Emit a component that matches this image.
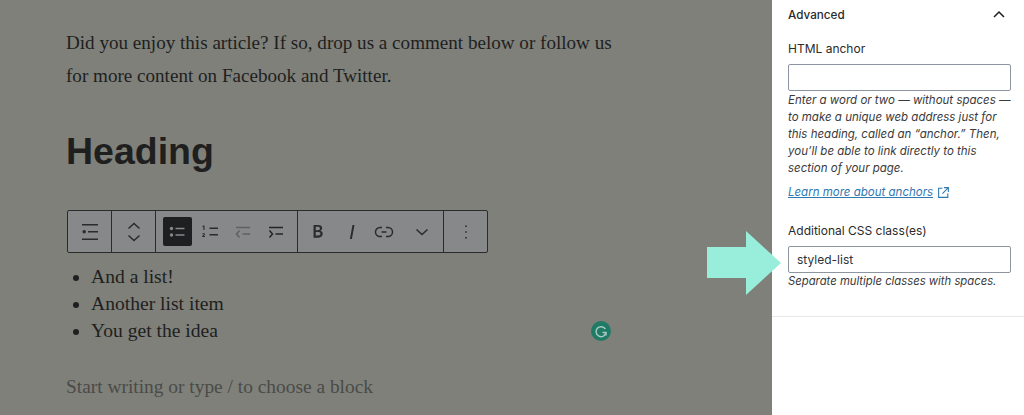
<div class="page">
  <main class="editor">
    <p class="para">Did you enjoy this article? If so, drop us a comment below or follow us for more content on Facebook and Twitter.</p>
    <h2>Heading</h2>
    <div class="toolbar">
      <div class="group g1">
        <button aria-label="List"><svg viewBox="0 0 24 24" width="24" height="24"><path d="M4 4h16v1.5H4zM10 11h10v1.5H10zM4 18.5h16V20H4z"/><circle cx="6.2" cy="11.8" r="1.7"/></svg></button>
      </div>
      <div class="group g2">
        <button aria-label="Move"><svg viewBox="0 0 24 28" width="24" height="28" fill="none" stroke="#2a2b2d" stroke-width="1.5"><path d="M6.500 10.500 12 5.500l5.500 5M6.500 17.500l5.500 5 5.500-5"/></svg></button>
      </div>
      <div class="group g3">
        <button class="active" aria-label="Bulleted"><svg viewBox="0 0 24 24" width="24" height="24"><circle cx="6.5" cy="8.500" r="1.7"/><circle cx="6.5" cy="15" r="1.7"/><path d="M10.500 7.700h9v1.600h-9zM10.500 14.200h9v1.600h-9z"/></svg></button>
        <button aria-label="Numbered"><svg viewBox="0 0 24 24" width="24" height="24"><path d="M11.500 7.500h8.500v1.600h-8.500zM11.500 14h8.500v1.600h-8.500zM5.400 5.500h1.100V10H5.400V6.800l-.9.4v-1zM4.300 13.500c.4-.6 2.600-.9 2.600.7 0 .8-.8 1.200-1.400 1.800h1.500v.9H4.200v-.8l1.500-1.500c.4-.5.1-.8-.2-.8-.3 0-.6.2-.9.4z"/></svg></button>
        <button class="dim" aria-label="Outdent"><svg viewBox="0 0 24 24" width="24" height="24" fill="none" stroke="#5f6062" stroke-width="1.500"><path d="M5 7.500h14M11.500 14h7.500M8.500 10.500 5.500 14l3 3.500"/></svg></button>
        <button aria-label="Indent"><svg viewBox="0 0 24 24" width="24" height="24" fill="none" stroke="#232426" stroke-width="1.500"><path d="M5 7.500h14M11.500 14h7.500M5.500 10.500l3 3.500-3 3.500"/></svg></button>
      </div>
      <div class="group g4">
        <button aria-label="Bold"><svg viewBox="0 0 24 24" width="21" height="21"><path d="M7.500 4.500h5.300c2.800 0 4.500 1.400 4.500 3.600 0 1.500-.8 2.600-2.100 3.100 1.700.4 2.800 1.700 2.800 3.500 0 2.500-1.900 4.300-5 4.300H7.500zm2.500 2.200v4h2.400c1.500 0 2.400-.8 2.400-2 0-1.300-.9-2-2.400-2zm0 6v3.800h2.700c1.700 0 2.700-.7 2.700-1.900 0-1.300-1-1.900-2.700-1.900z" fill-rule="evenodd"/></svg></button>
        <button aria-label="Italic"><svg viewBox="0 0 24 24" width="24" height="24"><path d="M12.500 5h2l-2.600 14h-2z"/></svg></button>
        <button class="linkbtn" aria-label="Link"><svg viewBox="0 0 24 24" width="24" height="24" fill="none" stroke="#2a2b2d" stroke-width="1.500"><path d="M10 7.500H8a4.500 4.500 0 0 0 0 9h2M14 7.500h2a4.500 4.500 0 0 1 0 9h-2M9.500 12h5"/></svg></button>
        <button class="morebtn" aria-label="More"><svg viewBox="0 0 24 24" width="24" height="24" fill="none" stroke="#2a2b2d" stroke-width="1.500"><path d="M6.500 9.500 12 14.500l5.500-5"/></svg></button>
      </div>
      <div class="group g5">
        <button aria-label="Options"><svg viewBox="0 0 24 24" width="24" height="24"><path d="M11.200 5.500h1.600v1.600h-1.600zM11.200 11.200h1.600v1.600h-1.600zM11.200 16.900h1.600v1.600h-1.600z"/></svg></button>
      </div>
    </div>
    <ul>
      <li>And a list!</li>
      <li>Another list item</li>
      <li>You get the idea</li>
    </ul>
    <p class="placeholder">Start writing or type / to choose a block</p>
  </main>
  <aside class="sidebar">
    <div class="panel">
      <div class="panel-head">
        <span>Advanced</span>
        <svg viewBox="0 0 24 24" width="24" height="24" fill="none" stroke="#1e1e1e" stroke-width="1.500"><path d="M7 14 12 9l5 5"/></svg>
      </div>
      <label for="anchor">HTML anchor</label>
      <input id="anchor" type="text" />
      <p class="help">Enter a word or two — without spaces — to make a unique web address just for this heading, called an “anchor.” Then, you’ll be able to link directly to this section of your page.</p>
      <p class="learn"><span class="link">Learn more about anchors</span><svg viewBox="0 0 24 24" width="13" height="13" fill="none" stroke="#2f78b0" stroke-width="2"><path d="M10 4H3v17h17v-7M13 3h8v8M21 3 10 14"/></svg></p>
      <label for="css">Additional CSS class(es)</label>
      <input id="css" type="text" value="styled-list" />
      <p class="help tight">Separate multiple classes with spaces.</p>
    </div>
  </aside>
  <svg class="grammarly" viewBox="0 0 20 20" width="20" height="20"><circle cx="10" cy="10" r="10" fill="#1f7a66"/><path d="M14.300 8A5 5 0 1 0 15 11.500H11.500M15 11.500v3" fill="none" stroke="#a9c9c0" stroke-width="1.500"/></svg>
  <svg class="arrow" viewBox="0 0 74 64" width="74" height="64"><path d="M0 16h39V0l35 32-35 32V47H0z" fill="#98eeda"/></svg>
</div>

<style>
  :global(body) { margin: 0; }
  .page { display: flex; width: 1024px; height: 415px; overflow: hidden; position: relative; }
  .editor { width: 772px; flex: none; background: #7f807a; box-sizing: border-box; padding: 26px 0 0 66px; font-family: "Liberation Serif", serif; color: #1e1f1e; }
  .para { margin: 0; width: 560px; font-size: 19.100px; line-height: 33px; }
  h2 { margin: 37px 0 0; font: 700 37.500px/44px "Liberation Sans", sans-serif; color: #1e1f1e; }
  .toolbar { margin: 37px 0 0 1px; width: 421px; height: 43px; box-sizing: border-box; display: flex; background: #87888a; border: 1px solid #2a2b2d; border-radius: 2px; }
  .group { display: flex; align-items: center; justify-content: center; border-right: 1px solid #2a2b2d; height: 100%; box-sizing: border-box; }
  .group:last-child { border-right: 0; flex: 1; }
  .g1 { width: 44px; }
  .g2 { width: 44px; }
  .g3 { width: 142px; gap: 4px; }
  .g4 { width: 146px; gap: 5px; justify-content: flex-start; padding-left: 5px; }
  button { border: 0; padding: 0; background: none; width: 29px; height: 29px; display: flex; align-items: center; justify-content: center; border-radius: 2px; }
  .linkbtn { margin-left: -2px; }
  .morebtn { margin-left: 4px; }
  svg { display: block; flex: none; }
  .toolbar svg { fill: #2a2b2d; }
  .toolbar svg[fill="none"] { fill: none; }
  .active { background: #1e1f21; }
  .active svg { fill: #87888a; }
  ul { margin: 10px 0 0; padding: 0 0 0 25px; font-size: 19.600px; line-height: 27px; }
  .placeholder { margin: 29px 0 0; font-size: 19.400px; line-height: 27px; color: #4a4b48; }
  .sidebar { width: 252px; flex: none; background: #fff; font-family: "Inter", "Liberation Sans", sans-serif; color: #2a2a2a; font-size: 12px; }
  .panel { padding: 0 13px 16px 16px; border-bottom: 1px solid #e8e8e8; height: 317px; box-sizing: border-box; }
  .panel-head { display: flex; align-items: center; justify-content: space-between; height: 29px; font-weight: 500; font-size: 11.700px; }
  label { display: block; font-size: 12px; line-height: 16px; margin-top: 12px; }
  input { display: block; width: 223px; height: 27px; box-sizing: border-box; margin: 7px 0 0; padding: 0 8px; border: 1px solid #8d96a0; border-radius: 2px; font: 12px "Inter", "Liberation Sans", sans-serif; color: #2c3338; background: #fff; outline: 0; }
  .help { margin: 1px 0 0; font-style: italic; font-size: 11.500px; line-height: 17px; color: #3a3a3a; }
  .help.tight { margin-top: 0; font-size: 11.300px; }
  .learn { margin: 7px 0 0; display: flex; align-items: center; gap: 4px; font-style: italic; font-size: 11.500px; line-height: 17px; color: #2f78b0; }
  .link { text-decoration: underline; }
  .learn + label { margin-top: 22px; }
  .grammarly { position: absolute; left: 591px; top: 321px; }
  .arrow { position: absolute; left: 707px; top: 231px; }
</style>
